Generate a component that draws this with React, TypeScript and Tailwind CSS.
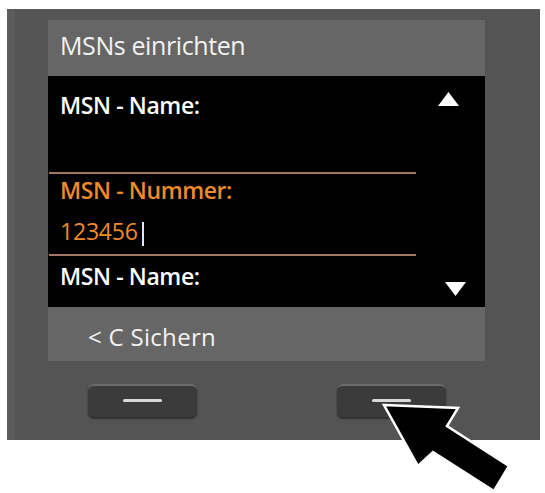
import React from "react";

const font = { fontFamily: '"Open Sans", "Noto Sans", Arial, sans-serif' };

const SoftKey = () => (
  <div className="flex h-[33px] w-[109px] items-center justify-center rounded-[6px] border-t-2 border-[#6b6b6b] bg-[#3b3b3b] shadow-[0_2px_2px_rgba(0,0,0,0.45)]">
    <div className="mt-[-2px] h-[3px] w-[39px] rounded-full bg-[#d8d8d8]" />
  </div>
);

const Triangle = ({ up }: { up?: boolean }) => (
  <svg width="21" height="14" viewBox="0 0 21 14">
    <polygon points={up ? "10.5,0 21,14 0,14" : "0,0 21,0 10.5,14"} fill="#fff" />
  </svg>
);

export default function App() {
  return (
    <div className="relative h-[493px] w-[545px] overflow-hidden bg-white" style={font}>
      <div className="absolute left-[7px] top-[9px] h-[431px] w-[533px] border-l-[8px] border-t border-[#5c5c5c] bg-[#545454] pl-[33px] pt-[10px]">
        <div className="flex w-[437px] flex-col">
          {/* header */}
          <div className="h-[56px] bg-[#666666] pl-[12px] pt-[10px] text-[25px] leading-[30px] tracking-[-0.4px] text-[#f2f2f2]">
            MSNs einrichten
          </div>

          {/* list */}
          <div className="flex h-[231px] flex-col bg-black">
            <div className="flex h-[96px] justify-between pl-[12px] pr-[26px] pt-[15px]">
              <span className="text-[23px] font-semibold leading-[28px] tracking-[-0.4px] text-white">MSN - Name:</span>
              <div className="mt-[1px]">
                <Triangle up />
              </div>
            </div>
            <div className="ml-[1px] h-[2px] w-[367px] bg-[#a37663]" />
            <div className="flex h-[80px] flex-col pl-[12px] pt-[2px]">
              <span className="text-[23px] font-semibold leading-[28px] tracking-[-0.4px] text-[#ee8a2c]">MSN - Nummer:</span>
              <div className="mt-[13px] flex items-start">
                <span className="text-[23px] leading-[28px] tracking-[-0.2px] text-[#ee8a2c]">123456</span>
                <div className="ml-[4px] mt-[5px] h-[24px] w-[2px] bg-[#dce8ff]" />
              </div>
            </div>
            <div className="ml-[1px] h-[2px] w-[367px] bg-[#a37663]" />
            <div className="flex h-[51px] justify-between pl-[12px] pr-[19px] pt-[6px]">
              <span className="text-[23px] font-semibold leading-[28px] tracking-[-0.4px] text-white">MSN - Name:</span>
              <div className="mt-[20px]">
                <Triangle />
              </div>
            </div>
          </div>

          {/* footer */}
          <div className="h-[54px] bg-[#666666] pl-[40px] pt-[15px] text-[24px] leading-[29px] tracking-[0.3px] text-[#f2f2f2]">
            &lt; C Sichern
          </div>
        </div>

        {/* soft keys */}
        <div className="mt-[23px] flex gap-[140px] pl-[40px]">
          <SoftKey />
          <SoftKey />
        </div>
      </div>

      {/* pointing arrow */}
      <svg className="absolute left-0 top-0" width="545" height="493" viewBox="0 0 545 493">
        <polygon
          points="384,405 458,408 447,426 509,466 494,491 433,452 418,466"
          fill="#000"
          stroke="#fff"
          strokeWidth="2.5"
          strokeLinejoin="miter"
        />
      </svg>
    </div>
  );
}
